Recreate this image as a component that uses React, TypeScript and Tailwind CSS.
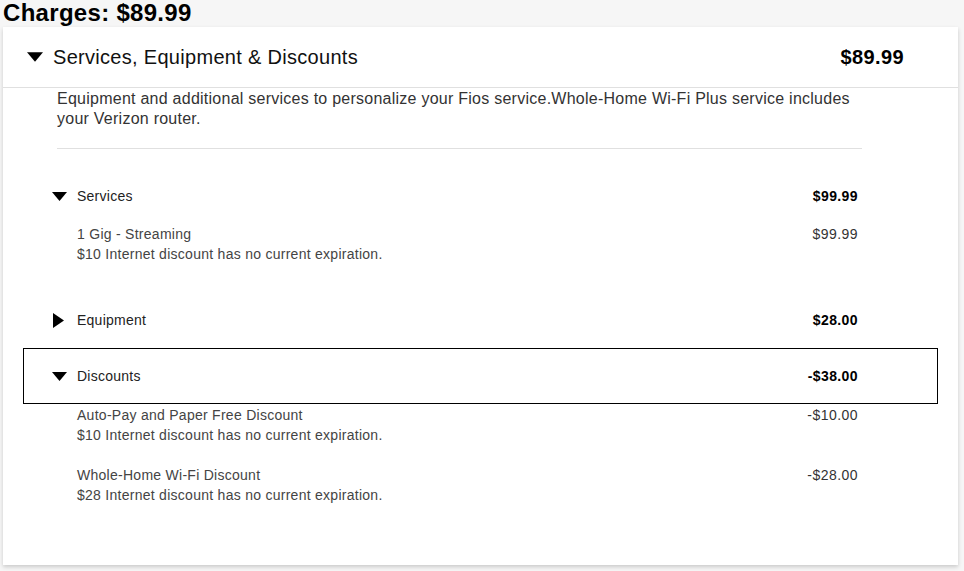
import React from 'react'

const font = { fontFamily: '"Liberation Sans", Arial, sans-serif' }

function Down({ size = 15 }: { size?: number }) {
  return (
    <svg width={size} height={Math.round(size * 0.6)} viewBox="0 0 15 9" className="shrink-0">
      <polygon points="0,0 15,0 7.5,9" fill="#000" />
    </svg>
  )
}

function Right() {
  return (
    <svg width={11} height={15} viewBox="0 0 11 15" className="shrink-0">
      <polygon points="0,0 11,7.5 0,15" fill="#000" />
    </svg>
  )
}

function Row({ label, amount, open = true, boxed = false }: { label: string; amount: string; open?: boolean; boxed?: boolean }) {
  return (
    <div className={`mx-[20px] flex h-[56px] items-center justify-between pl-[28px] pr-[79px] ${boxed ? 'border border-black' : 'border border-transparent'}`}>
      <div className="flex items-center">
        <div className="flex w-[25px] items-center">{open ? <Down /> : <span className="pl-[1px]"><Right /></span>}</div>
        <span className="text-[14px] tracking-[0.25px] text-[#222]">{label}</span>
      </div>
      <span className="text-[14px] font-bold tracking-[0.4px] text-black">{amount}</span>
    </div>
  )
}

function Item({ name, note, amount }: { name: string; note: string; amount: string }) {
  return (
    <div className="ml-[74px] mr-[100px] flex justify-between text-[14px] leading-[20px] tracking-[0.27px] text-[#444]">
      <div>
        <div>{name}</div>
        <div>{note}</div>
      </div>
      <div className="tracking-[0.45px] text-[#333]">{amount}</div>
    </div>
  )
}

export default function App() {
  return (
    <div style={font} className="min-h-[571px] bg-[#f6f6f6] pl-[3px]">
      <h1 className="h-[27px] text-[24px] font-bold leading-[25px] tracking-[0.3px] text-black">Charges: $89.99</h1>
      <div className="h-[538px] w-[955px] bg-white shadow-[0_2px_4px_rgba(0,0,0,0.18)]">
        <div className="flex h-[61px] items-center justify-between border-b border-[#e0e0e0] pl-[24px] pr-[54px]">
          <div className="flex items-center">
            <div className="w-[26px]">
              <Down size={16} />
            </div>
            <span className="text-[20px] tracking-[0.3px] text-[#111]">Services, Equipment &amp; Discounts</span>
          </div>
          <span className="text-[20px] font-bold tracking-[0.4px] text-black">$89.99</span>
        </div>
        <div className="ml-[54px] mr-[96px] border-b border-[#e0e0e0] pb-[19px] pt-[1px] text-[16px] leading-[20px] tracking-[0.25px] text-[#333]">
          Equipment and additional services to personalize your Fios service.Whole-Home Wi-Fi Plus service includes your Verizon router.
        </div>
        <div className="pt-[19px]">
          <Row label="Services" amount="$99.99" />
          <Item name="1 Gig - Streaming" note="$10 Internet discount has no current expiration." amount="$99.99" />
          <div className="h-[28px]" />
          <Row label="Equipment" amount="$28.00" open={false} />
          <Row label="Discounts" amount="-$38.00" boxed />
          <div className="pt-[1px]">
            <Item name="Auto-Pay and Paper Free Discount" note="$10 Internet discount has no current expiration." amount="-$10.00" />
          </div>
          <div className="pt-[20px]">
            <Item name="Whole-Home Wi-Fi Discount" note="$28 Internet discount has no current expiration." amount="-$28.00" />
          </div>
        </div>
      </div>
    </div>
  )
}
